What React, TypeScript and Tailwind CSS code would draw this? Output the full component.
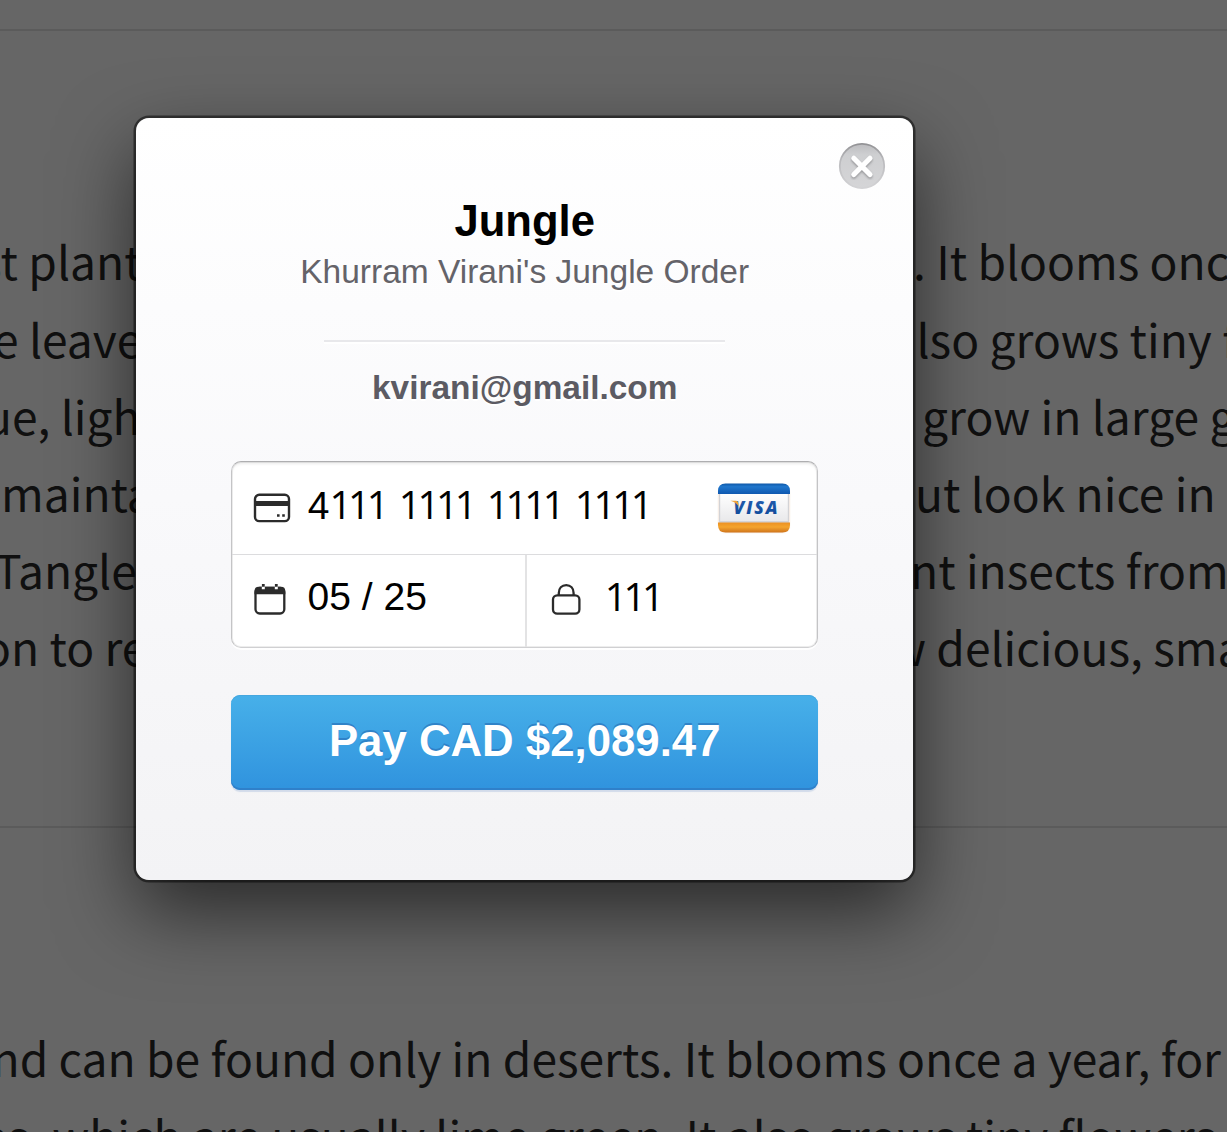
type Line = { left: string; leftShift: string; right: string; rightShift: string };

const firstParagraph: Line[] = [
  { left: 'st plant', leftShift: '-ml-[20px]', right: '. It blooms once', rightShift: 'ml-[13px]' },
  { left: 'e leave', leftShift: '-ml-[7px]', right: 'lso grows tiny f', rightShift: 'ml-[16.500px]' },
  { left: 'ue, ligh', leftShift: '-ml-[16px]', right: 'grow in large g', rightShift: 'ml-[22px]' },
  { left: 'mainta', leftShift: 'ml-[1px]', right: 'ut look nice in', rightShift: 'ml-[15px]' },
  { left: 'Tangle', leftShift: '-ml-[6px]', right: 'nt insects from', rightShift: 'ml-[10px]' },
  { left: 'on to re', leftShift: '-ml-[17px]', right: 'w delicious, sma', rightShift: '-ml-[11px]' },
];

function Backdrop() {
  return (
    <div className="h-full overflow-hidden bg-[#666666] font-['Noto_Sans_CJK_SC',sans-serif] text-[46.150px] leading-[77.2px] whitespace-pre text-[#101010]">
      <div className="h-[29px]" />
      <article className="h-[797px] border-t-2 border-[#5b5b5b] pt-[190.400px]">
        {firstParagraph.map((line) => (
          <div key={line.left} className="flex h-[77.2px]">
            <div className="w-[900px] shrink-0">
              <p className={line.leftShift}>{line.left}</p>
            </div>
            <p className={line.rightShift}>{line.right}</p>
          </div>
        ))}
      </article>
      <article className="border-t-2 border-[#5b5b5b] pt-[190.400px]">
        <p className="-ml-[8.500px]">nd can be found only in deserts. It blooms once a year, for</p>
        <p className="-ml-[18px]">es, which are usually lime green. It also grows tiny flowers</p>
      </article>
    </div>
  );
}

function CloseIcon() {
  return (
    <svg className="size-[50px]" viewBox="0 0 50 50" fill="none">
      <defs>
        <linearGradient id="closeRim" x1="0" y1="0" x2="0" y2="1">
          <stop offset="0" stopColor="#929295" />
          <stop offset=".35" stopColor="#b9b9bc" />
          <stop offset="1" stopColor="#d3d3d5" />
        </linearGradient>
        <linearGradient id="closeFill" x1="0" y1="0" x2="0" y2="1">
          <stop offset="0" stopColor="#bcbcbf" />
          <stop offset=".25" stopColor="#cecfd1" />
          <stop offset="1" stopColor="#d5d5d7" />
        </linearGradient>
        <filter id="crossShadow" x="-20%" y="-20%" width="140%" height="150%">
          <feDropShadow dx="0" dy="1.6" stdDeviation="1" floodColor="#77777a" floodOpacity=".7" />
        </filter>
      </defs>
      <circle cx="25" cy="25" r="22.2" fill="url(#closeFill)" stroke="url(#closeRim)" strokeWidth="1.8" />
      <path d="M16.800 17.200 33 33.500M33 17.200 16.800 33.500" stroke="#fff" strokeWidth="5" strokeLinecap="round" filter="url(#crossShadow)" />
    </svg>
  );
}

function CardIcon() {
  return (
    <svg className="h-[30px] w-[38px]" viewBox="0 0 38 30" fill="none">
      <rect x="2" y="1.800" width="34" height="26.300" rx="4.200" stroke="#2b2b2b" strokeWidth="2.400" />
      <path d="M2 10.500h34" stroke="#2b2b2b" strokeWidth="5" />
      <path d="M24 22.500h2.600M29.200 22.500h2.600" stroke="#2b2b2b" strokeWidth="2.600" />
    </svg>
  );
}

function CalendarIcon() {
  return (
    <svg className="h-[33px] w-[32px]" viewBox="0 0 32 33" fill="none">
      <rect x="1.500" y="5" width="28.800" height="25.500" rx="4.200" stroke="#2b2b2b" strokeWidth="2.300" />
      <path d="M.500 11.200V8q0-4.300 4.300-4.300H27q4.300 0 4.300 4.300v3.200z" fill="#2b2b2b" />
      <path d="M9.300 2.800v3.400M22.300 2.800v3.400" stroke="#fff" strokeWidth="3" />
      <path d="M9.300 1v2.800M22.300 1v2.800" stroke="#2b2b2b" strokeWidth="2.800" />
    </svg>
  );
}

function LockIcon() {
  return (
    <svg className="h-[33px] w-[30px]" viewBox="0 0 30 33" fill="none" stroke="#2b2b2b" strokeWidth="2.300">
      <rect x="2" y="12.300" width="26.400" height="18.300" rx="4.200" />
      <path d="M7.800 12.300v-2.200C7.800 5.400 10.800 2.200 15.200 2.200s7.400 3.200 7.400 7.900v2.200" />
    </svg>
  );
}

function VisaLogo() {
  return (
    <svg className="h-[54px] w-[78px]" viewBox="0 0 78 54">
      <defs>
        <linearGradient id="visaBlue" x1="0" y1="0" x2="0" y2="1">
          <stop offset="0" stopColor="#0f58a8" />
          <stop offset=".3" stopColor="#1f76cc" />
          <stop offset="1" stopColor="#0f58b0" />
        </linearGradient>
        <linearGradient id="visaGold" x1="0" y1="0" x2="0" y2="1">
          <stop offset="0" stopColor="#ec9122" />
          <stop offset=".45" stopColor="#f4a42d" />
          <stop offset="1" stopColor="#cf741c" />
        </linearGradient>
        <linearGradient id="visaBody" x1="0" y1="0" x2="0" y2="1">
          <stop offset="0" stopColor="#ffffff" />
          <stop offset="1" stopColor="#e9e9eb" />
        </linearGradient>
        <linearGradient id="visaText" x1="0" y1="0" x2="0" y2="1">
          <stop offset="0" stopColor="#2561b4" />
          <stop offset="1" stopColor="#0d4897" />
        </linearGradient>
        <filter id="visaShadow" x="-10%" y="-10%" width="120%" height="130%">
          <feDropShadow dx="0" dy="1" stdDeviation="1.2" floodColor="#b06a30" floodOpacity=".35" />
        </filter>
      </defs>
      <rect x="4" y="4" width="70" height="46" rx="8" fill="#d3d3d6" filter="url(#visaShadow)" />
      <path d="M5.200 12h67.600v28H5.200z" fill="url(#visaBody)" />
      <path d="M3 13v-3q0-7.500 7.500-7.500h57q7.500 0 7.500 7.500v3z" fill="url(#visaBlue)" />
      <path d="M3 41.500h72v2.500q0 7.500-7.500 7.500h-57Q3 51.500 3 44z" fill="url(#visaGold)" />
      <text
        x="18.500"
        y="32.800"
        textLength="44"
        fontSize="17.5"
        fontWeight="800"
        fontStyle="italic"
        fill="url(#visaText)"
        className="font-['Open_Sans',sans-serif]"
      >
        VISA
      </text>
      <path d="M15.500 19.800h5.600q1.700 0 2 1.500l.8 4.500q-2.500-4.500-8.400-6z" fill="#f0a33a" />
    </svg>
  );
}

function CheckoutModal() {
  return (
    <section className="relative flex h-[762px] w-[777.400px] flex-col items-center rounded-[13px] bg-linear-to-b from-white via-[#f9f9fb] to-[#f3f3f5] shadow-[0_0_0_2.5px_rgba(0,0,0,0.5),0_31px_78px_0_rgba(0,0,0,0.6)]">
      <button className="absolute top-[23px] right-[26.400px]" aria-label="Close">
        <CloseIcon />
      </button>
      <h1 className="mt-[78px] text-[43.600px] leading-[50px] font-bold text-black">Jungle</h1>
      <h2 className="mt-[6px] text-[33.500px] leading-[40px] text-[#646369] [text-shadow:0_2px_0_#fff]">Khurram Virani's Jungle Order</h2>
      <hr className="mt-[48px] h-[2px] w-[401px] border-0 bg-[#e8e8eb] shadow-[0_2px_0_#fff]" />
      <p className="mt-[26px] text-[33.400px] leading-[40px] font-bold text-[#5c5b63] [text-shadow:0_2px_0_#fff]">kvirani@gmail.com</p>

      <div className="mt-[53px] flex h-[187px] w-[587px] flex-col rounded-[10px] border border-t-[#aeaeb0] border-r-[#c4c4c6] border-b-[#d0d0d2] border-l-[#c4c4c6] bg-white text-[39px] leading-[46px] text-black shadow-[0_2px_0_rgba(255,255,255,0.9),inset_0_0_0_1px_rgba(0,0,0,0.07),inset_0_3px_3px_-1px_rgba(0,0,0,0.08)]">
        <div className="flex h-[93px] items-center border-b border-[#dcdcde] pr-[24px] pl-[21px]">
          <CardIcon />
          <span className="mb-[7px] ml-[16.500px] flex-1">
            4<span className="font-['Open_Sans',sans-serif] tracking-[-3.600px] [word-spacing:6.700px]">111 1111 1111 1111</span>
          </span>
          <VisaLogo />
        </div>
        <div className="flex flex-1">
          <div className="flex w-[295px] items-center border-r-2 border-[#e3e3e4] pb-[4px] pl-[22px]">
            <CalendarIcon />
            <span className="mb-[4px] ml-[21.400px]">05 / 25</span>
          </div>
          <div className="flex flex-1 items-center pb-[4px] pl-[24px]">
            <LockIcon />
            <span className="mb-[4px] ml-[23.500px]">
              <span className="font-['Open_Sans',sans-serif] tracking-[-3.600px]">111</span>
            </span>
          </div>
        </div>
      </div>

      <button className="mt-[47px] h-[95px] w-[587px] rounded-[9px] bg-linear-to-b from-[#47b0e9] to-[#3093de] pb-[3px] text-[43.750px] leading-[50px] font-bold text-white shadow-[inset_0_-2px_0_#2f80ca,inset_0_1px_0_#45a7df,0_2px_1px_#d2dbea] [text-shadow:0_-2px_0_rgba(46,125,195,0.85)]">
        Pay CAD $2,089.47
      </button>
    </section>
  );
}

export default function App() {
  return (
    <main className="relative h-[1132px] w-[1227px] overflow-hidden">
      <Backdrop />
      <div className="absolute inset-0 flex items-start pt-[118px] pl-[136px] font-['Liberation_Sans',Arial,sans-serif]">
        <CheckoutModal />
      </div>
    </main>
  );
}
